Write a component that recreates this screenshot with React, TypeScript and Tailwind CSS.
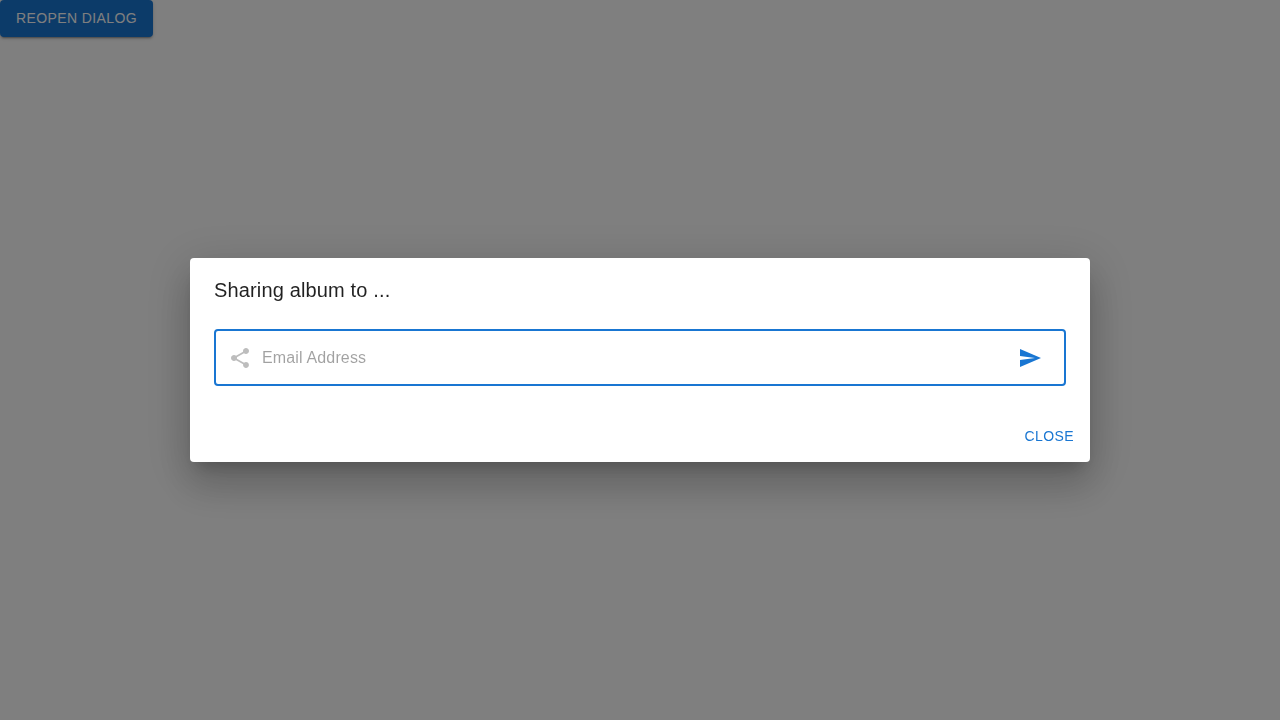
import React from "react";

export default function App() {
  return (
    <div className="h-screen overflow-hidden bg-white font-['Liberation_Sans',Arial,sans-serif]">
      <button className="flex h-[36.5px] items-center rounded-[4px] bg-[#1976d2] px-4 py-1.5 text-sm leading-[24.5px] font-medium tracking-[0.4px] text-white uppercase shadow-[0px_3px_1px_-2px_rgba(0,0,0,0.2),0px_2px_2px_0px_rgba(0,0,0,0.14),0px_1px_5px_0px_rgba(0,0,0,0.12)]">
        Reopen dialog
      </button>
      <div className="fixed inset-0 flex items-center justify-center bg-black/50">
        <div
          role="dialog"
          aria-labelledby="share-title"
          className="flex w-[900px] flex-col rounded-[4px] bg-white text-black/87 shadow-[0px_11px_15px_-7px_rgba(0,0,0,0.2),0px_24px_38px_3px_rgba(0,0,0,0.14),0px_9px_46px_8px_rgba(0,0,0,0.12)]"
        >
          <h2 id="share-title" className="px-6 py-4 text-xl leading-8 font-medium tracking-[0.15px]">
            Sharing album to ...
          </h2>
          <div className="px-6 pt-[7px] pb-[23.5px]">
            <div className="flex h-[57px] items-center rounded-[4px] border-2 border-[#1976d2] pr-3.5 pl-3">
              <svg viewBox="0 0 24 24" className="mr-2.5 size-6 shrink-0 fill-[#bdbdbd]">
                <path d="M18 16.08c-.76 0-1.44.3-1.96.77L8.91 12.7c.05-.23.09-.46.09-.7s-.04-.47-.09-.7l7.05-4.11c.54.5 1.25.81 2.04.81 1.66 0 3-1.34 3-3s-1.34-3-3-3-3 1.34-3 3c0 .24.04.47.09.7L8.04 9.81C7.5 9.31 6.79 9 6 9c-1.66 0-3 1.34-3 3s1.34 3 3 3c.79 0 1.5-.31 2.04-.81l7.12 4.16c-.05.21-.08.43-.08.65 0 1.61 1.31 2.92 2.92 2.92s2.92-1.31 2.92-2.92-1.31-2.92-2.92-2.92" />
              </svg>
              <input
                type="email"
                placeholder="Email Address"
                className="h-[23px] min-w-0 flex-1 bg-transparent text-base leading-[23px] tracking-[0.15px] outline-none placeholder:text-black/37"
              />
              <button aria-label="Send" className="p-2">
                <svg viewBox="0 0 24 24" className="size-6 fill-[#1976d2]">
                  <path d="M2.01 21 23 12 2.01 3 2 10l15 2-15 2z" />
                </svg>
              </button>
            </div>
          </div>
          <div className="flex justify-end p-2">
            <button className="h-[36.5px] rounded-[4px] px-2 py-1.5 text-sm leading-[24.5px] font-medium tracking-[0.4px] text-[#1976d2] uppercase">
              Close
            </button>
          </div>
        </div>
      </div>
    </div>
  );
}
